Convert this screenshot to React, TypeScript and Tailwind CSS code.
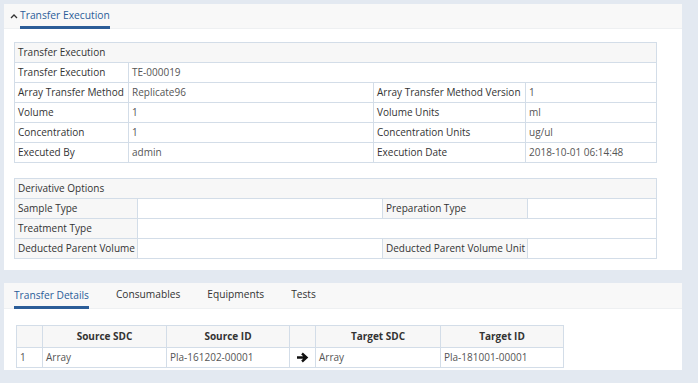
import React from "react";

const cell = "border border-[#d3dde8] px-[3px] h-[20px] align-middle whitespace-nowrap overflow-hidden";

const Chevron: React.FC = () => (
  <svg width="8" height="6" viewBox="0 0 8 6" className="mr-[2px]">
    <path d="M1 5 L4 2 L7 5" fill="none" stroke="#333" strokeWidth="1.3" />
  </svg>
);

const Arrow: React.FC = () => (
  <svg width="13" height="11" viewBox="0 0 13 11">
    <path d="M1 5.5 H10 M6 1.5 L10.5 5.5 L6 9.5" fill="none" stroke="#111" strokeWidth="2.4" />
  </svg>
);

const App: React.FC = () => {
  return (
    <div
      className="w-[698px] h-[383px] overflow-hidden bg-[#e3e9f1] pt-[4px] pl-[4px] text-[10px] text-[#333]"
      style={{ fontFamily: '"Open Sans", "Noto Sans", sans-serif' }}
    >
      {/* panel: transfer execution */}
      <div className="w-[678px] h-[266px] bg-white">
        <div className="h-[25px] bg-[#f8f8f8] border-b border-[#eef0f2] flex items-end pl-[6px]">
          <div className="flex items-center h-full">
            <Chevron />
            <div className="h-full flex flex-col justify-end">
              <span className="text-[10.3px] text-[#2b5d98] leading-[16px] mb-[3px]">Transfer Execution</span>
              <div className="h-[3px] bg-[#2b5d98] -mb-[1px]" />
            </div>
          </div>
        </div>

        <div className="pl-[10px] pt-[13px]">
          <table className="border-collapse table-fixed w-[642px]">
            <colgroup>
              <col className="w-[114px]" />
              <col className="w-[245px]" />
              <col className="w-[152px]" />
              <col className="w-[131px]" />
            </colgroup>
            <tbody>
              <tr>
                <td colSpan={4} className={`${cell} bg-[#f7f7f7]`}>Transfer Execution</td>
              </tr>
              <tr>
                <td className={cell}>Transfer Execution</td>
                <td colSpan={3} className={`${cell} text-[#555]`}>TE-000019</td>
              </tr>
              <tr>
                <td className={cell}>Array Transfer Method</td>
                <td className={`${cell} text-[#555]`}>Replicate96</td>
                <td className={cell}>Array Transfer Method Version</td>
                <td className={`${cell} text-[#555]`}>1</td>
              </tr>
              <tr>
                <td className={cell}>Volume</td>
                <td className={`${cell} text-[#555]`}>1</td>
                <td className={cell}>Volume Units</td>
                <td className={`${cell} text-[#555]`}>ml</td>
              </tr>
              <tr>
                <td className={cell}>Concentration</td>
                <td className={`${cell} text-[#555]`}>1</td>
                <td className={cell}>Concentration Units</td>
                <td className={`${cell} text-[#555]`}>ug/ul</td>
              </tr>
              <tr>
                <td className={cell}>Executed By</td>
                <td className={`${cell} text-[#555]`}>admin</td>
                <td className={cell}>Execution Date</td>
                <td className={`${cell} text-[#555]`}>2018-10-01 06:14:48</td>
              </tr>
            </tbody>
          </table>

          <table className="border-collapse table-fixed w-[642px] mt-[15px]">
            <colgroup>
              <col className="w-[123px]" />
              <col className="w-[245px]" />
              <col className="w-[145px]" />
              <col className="w-[129px]" />
            </colgroup>
            <tbody>
              <tr>
                <td colSpan={4} className={`${cell} bg-[#f7f7f7]`}>Derivative Options</td>
              </tr>
              <tr>
                <td className={`${cell} bg-[#f7f7f7]`}>Sample Type</td>
                <td className={cell}></td>
                <td className={`${cell} bg-[#f7f7f7]`}>Preparation Type</td>
                <td className={cell}></td>
              </tr>
              <tr>
                <td className={`${cell} bg-[#f7f7f7]`}>Treatment Type</td>
                <td colSpan={3} className={cell}></td>
              </tr>
              <tr>
                <td className={`${cell} bg-[#f7f7f7]`}>Deducted Parent Volume</td>
                <td className={cell}></td>
                <td className={`${cell} bg-[#f7f7f7]`}>Deducted Parent Volume Unit</td>
                <td className={cell}></td>
              </tr>
            </tbody>
          </table>
        </div>
      </div>

      {/* panel: transfer details */}
      <div className="w-[678px] h-[87px] bg-white mt-[13px]">
        <div className="h-[26px] bg-[#f8f8f8] border-b border-[#eef0f2] flex items-end pl-[10px] gap-[27px] text-[10.2px]">
          <div className="flex flex-col justify-end h-full">
            <span className="text-[#2b5d98] leading-[16px] mb-[3px]">Transfer Details</span>
            <div className="h-[3px] bg-[#2b5d98] -mb-[1px]" />
          </div>
          <span className="leading-[16px] mb-[6px]">Consumables</span>
          <span className="leading-[16px] mb-[6px]">Equipments</span>
          <span className="leading-[16px] mb-[6px]">Tests</span>
        </div>

        <div className="pl-[12px] pt-[16px]">
          <table className="border-collapse table-fixed w-[547px]">
            <colgroup>
              <col className="w-[26px]" />
              <col className="w-[124px]" />
              <col className="w-[123px]" />
              <col className="w-[26px]" />
              <col className="w-[125px]" />
              <col className="w-[123px]" />
            </colgroup>
            <thead>
              <tr className="font-bold bg-[#f7f7f7]">
                <th className={`${cell} h-[22px]`}></th>
                <th className={`${cell} h-[22px]`}>Source SDC</th>
                <th className={`${cell} h-[22px]`}>Source ID</th>
                <th className={`${cell} h-[22px]`}></th>
                <th className={`${cell} h-[22px]`}>Target SDC</th>
                <th className={`${cell} h-[22px]`}>Target ID</th>
              </tr>
            </thead>
            <tbody className="text-[#555]">
              <tr>
                <td className={cell}>1</td>
                <td className={cell}>Array</td>
                <td className={cell}>Pla-161202-00001</td>
                <td className={cell}>
                  <div className="flex justify-center"><Arrow /></div>
                </td>
                <td className={cell}>Array</td>
                <td className={cell}>Pla-181001-00001</td>
              </tr>
            </tbody>
          </table>
        </div>
      </div>
    </div>
  );
};

export default App;
